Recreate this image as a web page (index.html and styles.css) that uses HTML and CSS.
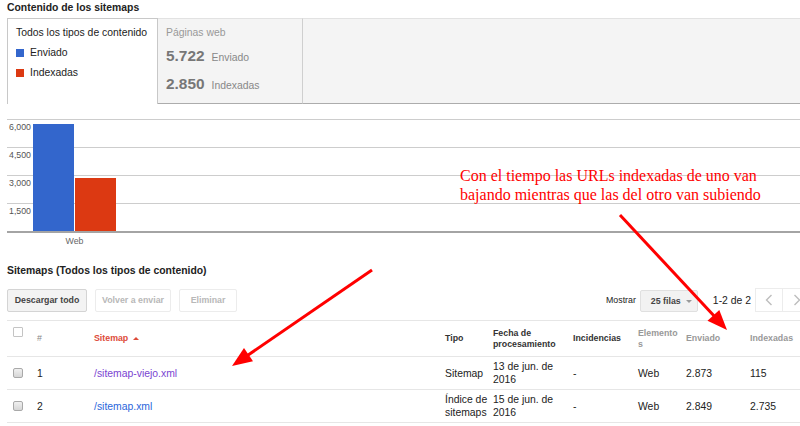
FILE: index.html
```html
<!DOCTYPE html>
<html lang="es">
<head>
<meta charset="utf-8">
<title>Contenido de los sitemaps</title>
<link rel="stylesheet" href="styles.css">
</head>
<body>
<div class="page">
  <h1 class="title">Contenido de los sitemaps</h1>

  <div class="tabs">
    <div class="tab tab-active">
      <div class="tab-head">Todos los tipos de contenido</div>
      <div class="legend-item"><span class="swatch swatch-blue"></span>Enviado</div>
      <div class="legend-item"><span class="swatch swatch-red"></span>Indexadas</div>
    </div>
    <div class="tab tab-inactive">
      <div class="tab-head tab-head-muted">Páginas web</div>
      <div class="stat"><span class="stat-num">5.722</span><span class="stat-label">Enviado</span></div>
      <div class="stat"><span class="stat-num">2.850</span><span class="stat-label">Indexadas</span></div>
    </div>
    <div class="tab-fill"></div>
  </div>

  <div class="chart">
    <div class="plot">
      <div class="grid-row"><span class="ylabel">6,000</span></div>
      <div class="grid-row"><span class="ylabel">4,500</span></div>
      <div class="grid-row"><span class="ylabel">3,000</span></div>
      <div class="grid-row"><span class="ylabel">1,500</span></div>
      <div class="bars">
        <div class="bar bar-blue" style="height:107px"></div>
        <div class="bar bar-red" style="height:53px"></div>
      </div>
    </div>
    <div class="xlabels"><span class="xlabel">Web</span></div>
  </div>

  <h2 class="section-title">Sitemaps (Todos los tipos de contenido)</h2>

  <div class="toolbar">
    <div class="toolbar-left">
      <button class="btn btn-primary btn-w80">Descargar todo</button>
      <button class="btn btn-disabled btn-w76">Volver a enviar</button>
      <button class="btn btn-disabled btn-w58">Eliminar</button>
    </div>
    <div class="toolbar-right">
      <span class="show-label">Mostrar</span>
      <span class="select">25 filas<span class="select-caret"></span></span>
      <span class="range">1-2 de 2</span>
      <span class="pager">
        <span class="pager-btn"><svg width="8" height="12" viewBox="0 0 8 12"><path d="M6.5 1 L1.5 6 L6.5 11" fill="none" stroke="#bdbdbd" stroke-width="1.4"/></svg></span>
        <span class="pager-btn"><svg width="8" height="12" viewBox="0 0 8 12"><path d="M1.5 1 L6.5 6 L1.5 11" fill="none" stroke="#bdbdbd" stroke-width="1.4"/></svg></span>
      </span>
    </div>
  </div>

  <div class="table">
    <div class="row row-head">
      <div class="cell cell-check-head"><span class="check-empty"></span></div>
      <div class="cell th th-muted th-light">#</div>
      <div class="cell th th-sort">Sitemap<span class="sort-caret"></span></div>
      <div class="cell th">Tipo</div>
      <div class="cell th">Fecha de procesamiento</div>
      <div class="cell th">Incidencias</div>
      <div class="cell th th-muted th-break">Elementos</div>
      <div class="cell th th-muted">Enviado</div>
      <div class="cell th th-muted">Indexadas</div>
    </div>
    <div class="row row-data">
      <div class="cell"><span class="check-gray"></span></div>
      <div class="cell">1</div>
      <div class="cell"><a class="link link-visited" href="#">/sitemap-viejo.xml</a></div>
      <div class="cell">Sitemap</div>
      <div class="cell">13 de jun. de 2016</div>
      <div class="cell">-</div>
      <div class="cell">Web</div>
      <div class="cell">2.873</div>
      <div class="cell">115</div>
    </div>
    <div class="row row-data">
      <div class="cell"><span class="check-gray"></span></div>
      <div class="cell">2</div>
      <div class="cell"><a class="link" href="#">/sitemap.xml</a></div>
      <div class="cell">Índice de sitemaps</div>
      <div class="cell">15 de jun. de 2016</div>
      <div class="cell">-</div>
      <div class="cell">Web</div>
      <div class="cell">2.849</div>
      <div class="cell">2.735</div>
    </div>
  </div>
</div>

<p class="note">Con el tiempo las URLs indexadas de uno van<br>bajando mientras que las del otro van subiendo</p>

<svg class="arrows" width="800" height="426" viewBox="0 0 800 426">
  <line x1="620" y1="215" x2="716" y2="318" stroke="#ff0000" stroke-width="3"/>
  <polygon points="727,330 707.5,320.8 719.3,310" fill="#ff0000"/>
  <line x1="372" y1="270" x2="246" y2="356.5" stroke="#ff0000" stroke-width="3"/>
  <polygon points="232,366 244,348.1 253,361.3" fill="#ff0000"/>
</svg>
</body>
</html>
```

FILE: styles.css
```css
html, body {
  margin: 0;
  padding: 0;
}

body {
  width: 800px;
  height: 426px;
  overflow: hidden;
  position: relative;
  background: #fff;
  font-family: "Liberation Sans", Arial, sans-serif;
  color: #222;
}

.page {
  padding-left: 7px;
  width: 823px;
}

.title {
  margin: 0;
  font-size: 10.4px;
  font-weight: bold;
  line-height: 15px;
  color: #222;
}

/* Tabs */
.tabs {
  display: flex;
  height: 86px;
  margin-top: 3px;
}

.tab-active {
  width: 151px;
  box-sizing: border-box;
  border: 1px solid #c8c8c8;
  border-bottom: 0;
  background: #fff;
  padding: 7px 0 0 8px;
  font-size: 10.4px;
}

.tab-inactive {
  width: 145px;
  box-sizing: border-box;
  background: #f4f4f4;
  border-top: 1px solid #e2e2e2;
  border-bottom: 1px solid #acacac;
  border-right: 1px solid #cfcfcf;
  padding: 7px 0 0 8px;
  font-size: 10.4px;
}

.tab-fill {
  flex: 1;
  box-sizing: border-box;
  background: #f4f4f4;
  border-top: 1px solid #e2e2e2;
  border-bottom: 1px solid #acacac;
}

.tab-head {
  line-height: 14px;
  color: #222;
  white-space: nowrap;
}

.tab-head-muted {
  color: #999;
}

.legend-item {
  display: flex;
  align-items: center;
  line-height: 14px;
  margin-top: 6px;
  color: #222;
}

.swatch {
  width: 8px;
  height: 8px;
  margin-right: 6px;
}

.swatch-blue { background: #3366cc; }
.swatch-red { background: #dc3912; }

.stat {
  line-height: 26px;
  white-space: nowrap;
}

.tab-head + .stat { margin-top: 3px; }

.stat-num {
  font-size: 15.4px;
  font-weight: bold;
  color: #777;
}

.stat-label {
  margin-left: 7px;
  font-size: 10.4px;
  color: #888;
}

/* Chart */
.chart {
  margin-top: 15px;
}

.plot {
  position: relative;
  border-bottom: 2px solid #a4a4a4;
}

.grid-row {
  height: 28px;
  box-sizing: border-box;
  border-top: 1px solid #cdcdcd;
}

.ylabel {
  display: block;
  margin-left: 2px;
  padding-top: 1px;
  font-size: 8.8px;
  line-height: 12px;
  color: #555;
}

.bars {
  position: absolute;
  left: 26px;
  bottom: 0;
  display: flex;
  align-items: flex-end;
  gap: 1px;
}

.bar { width: 41px; }
.bar-blue { background: #3366cc; }
.bar-red { background: #dc3912; }

.xlabels {
  padding: 2px 0 0 26px;
  height: 12px;
}

.xlabel {
  display: block;
  width: 83px;
  text-align: center;
  font-size: 8.8px;
  line-height: 12px;
  color: #666;
}

/* Section */
.section-title {
  margin: 16px 0 0;
  font-size: 10.4px;
  font-weight: bold;
  line-height: 15px;
  color: #222;
}

.toolbar {
  width: 804px;
  margin-top: 10px;
  height: 24px;
  display: flex;
  justify-content: space-between;
  align-items: center;
}

.toolbar-left {
  display: flex;
  gap: 8px;
}

.btn {
  height: 23px;
  box-sizing: border-box;
  padding: 0;
  display: flex;
  align-items: center;
  justify-content: center;
  font-family: "Liberation Sans", Arial, sans-serif;
  font-size: 8.8px;
  font-weight: bold;
  border-radius: 2px;
  white-space: nowrap;
}

.btn-w80 { width: 80px; }
.btn-w76 { width: 76px; }
.btn-w58 { width: 58px; }

.btn-primary {
  background: #f3f3f3;
  border: 1px solid #d4d4d4;
  color: #444;
}

.btn-disabled {
  background: #fff;
  border: 1px solid #ececec;
  color: #b8b8b8;
}

.toolbar-right {
  display: flex;
  align-items: center;
}

.show-label {
  font-size: 8.8px;
  color: #222;
  margin-right: 4px;
}

.select {
  width: 58px;
  height: 22px;
  box-sizing: border-box;
  display: flex;
  align-items: center;
  padding-left: 10px;
  background: #f2f2f2;
  border: 1px solid #e0e0e0;
  border-radius: 2px;
  font-size: 8.8px;
  font-weight: bold;
  color: #444;
  margin-top: 2px;
}

.select-caret {
  margin-left: 5px;
  width: 0;
  height: 0;
  border-left: 3px solid transparent;
  border-right: 3px solid transparent;
  border-top: 3px solid #999;
}

.range {
  margin-left: 15px;
  font-size: 10.4px;
  color: #222;
}

.pager {
  display: flex;
  margin-left: 4px;
}

.pager-btn {
  width: 28px;
  height: 24px;
  box-sizing: border-box;
  display: flex;
  align-items: center;
  justify-content: center;
  border: 1px solid #ececec;
  background: #fff;
}

.pager-btn + .pager-btn { border-left: 0; }

/* Table */
.table {
  margin-top: 8px;
  border-top: 1px solid #e6e6e6;
  width: 823px;
}

.row {
  display: grid;
  grid-template-columns: 30px 57px 351px 48px 80px 65px 48px 64px 80px;
  align-items: center;
  border-bottom: 1px solid #e6e6e6;
  box-sizing: border-box;
}

.row-head { height: 36px; }
.row-data { height: 33px; }

.cell {
  font-size: 10.4px;
  line-height: 13px;
  color: #222;
}

.th {
  font-size: 8.8px;
  line-height: 11px;
  font-weight: bold;
  color: #333;
}

.th-muted { color: #999; }

.th-light { font-weight: normal; color: #888; }

.th-break {
  padding-right: 6px;
  word-break: break-all;
}

.th-sort {
  color: #dd4b39;
  display: flex;
  align-items: center;
}

.sort-caret {
  margin-left: 5px;
  width: 0;
  height: 0;
  border-left: 3px solid transparent;
  border-right: 3px solid transparent;
  border-bottom: 3px solid #dd4b39;
}

.cell-check-head {
  align-self: start;
  padding-top: 6px;
}

.check-empty {
  display: block;
  margin-left: 6px;
  width: 10px;
  height: 10px;
  box-sizing: border-box;
  border: 1px solid #c4c4c4;
  background: #fff;
  border-radius: 1px;
}

.check-gray {
  display: block;
  margin-left: 6px;
  width: 10px;
  height: 10px;
  box-sizing: border-box;
  border: 1px solid #a9a9a9;
  border-radius: 2px;
  background: linear-gradient(#f0f0f0, #d6d6d6);
}

.link {
  color: #2b66db;
  text-decoration: none;
}

.link-visited { color: #7b44d1; }

/* Annotation overlay */
.note {
  position: absolute;
  left: 460px;
  top: 166px;
  margin: 0;
  font-family: "Liberation Serif", "Times New Roman", serif;
  font-size: 16px;
  line-height: 19px;
  color: #ff0000;
  white-space: nowrap;
}

.arrows {
  position: absolute;
  left: 0;
  top: 0;
  pointer-events: none;
}
```
